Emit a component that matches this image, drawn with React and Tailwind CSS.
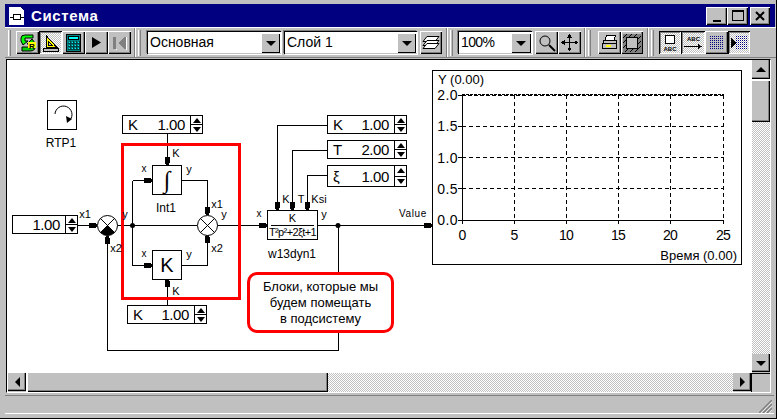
import React from "react";

const OX = 7, OY = 60;
const FONT = "font-['Liberation_Sans',Arial,sans-serif]";
const RAISED = "shadow-[inset_1px_1px_0_#fff,inset_-1px_-1px_0_#000,inset_-2px_-2px_0_#808080]";
const SCROLL = "shadow-[inset_-1px_-1px_0_#000,inset_-2px_-2px_0_#808080]";
const PRESSED = "shadow-[inset_1px_1px_0_#000,inset_-1px_-1px_0_#fff,inset_2px_2px_0_#808080]";
const DITHER = "bg-[repeating-conic-gradient(#c0c0c0_0_25%,#fff_0_50%)] bg-[length:2px_2px]";

function Pos({ x, y, w, h, className = "", children }) {
  return (
    <div className={"absolute " + className} style={{ left: x - OX, top: y - OY, width: w, height: h }}>
      {children}
    </div>
  );
}

function Lbl({ cx, cy, size = 11, className = "", children }) {
  return (
    <div
      className={"absolute -translate-x-1/2 -translate-y-1/2 whitespace-nowrap leading-none text-black " + className}
      style={{ left: cx - OX, top: cy - OY, fontSize: size }}
    >
      {children}
    </div>
  );
}

function Spinner({ x, y, w, h, label, value }) {
  return (
    <Pos x={x} y={y} w={w} h={h} className="flex border border-black bg-white text-black">
      <div className="flex-1 flex items-center justify-between pl-[5px] pr-[5px] text-[15px] leading-none">
        <span>{label}</span>
        <span className="tracking-[-0.4px]">{value}</span>
      </div>
      <div className="w-[12px] border-l border-black flex flex-col items-center">
        <div className="flex-1 w-full flex items-center justify-center border-b border-black">
          <div className="w-0 h-0 border-x-[4px] border-x-transparent border-b-[5px] border-b-black" />
        </div>
        <div className="flex-1 w-full flex items-center justify-center">
          <div className="w-0 h-0 border-x-[4px] border-x-transparent border-t-[5px] border-t-black" />
        </div>
      </div>
    </Pos>
  );
}

const ArrR = ({ x, y }) => <polygon points={`${x - 8},${y - 2} ${x - 3},${y - 2} ${x},${y - 1} ${x},${y + 2} ${x - 3},${y + 3} ${x - 8},${y + 3}`} fill="#000" />;
const ArrD = ({ x, y }) => <polygon points={`${x - 2},${y - 8} ${x + 3},${y - 8} ${x + 3},${y - 3} ${x + 2},${y} ${x - 1},${y} ${x - 2},${y - 3}`} fill="#000" />;
const ArrU = ({ x, y }) => <polygon points={`${x - 1},${y} ${x + 2},${y} ${x + 3},${y + 3} ${x + 3},${y + 8} ${x - 2},${y + 8} ${x - 2},${y + 3}`} fill="#000" />;

function Wires() {
  return (
    <svg className="absolute left-0 top-0" width="745" height="313" viewBox="7 60 745 313">
      <g fill="none" stroke="#000" strokeWidth="1" shapeRendering="crispEdges">
        <path d="M77.5 225.5H97" />
        <path d="M117 225.5H197" />
        <path d="M132.5 180.5H152M132.5 180.5V265.5H152" />
        <path d="M182 180.5H207.5V215" />
        <path d="M182 265.5H207.5V235" />
        <path d="M167.5 133V165M167.5 279V305" />
        <path d="M107.5 235V350.5H338.5V225" />
        <path d="M217 225.5H267M318 225.5H432" />
        <path d="M327 125.5H277.5V210M327 150.5H292.5V210M327 175.5H307.5V210" />
      </g>
      <circle cx="132.5" cy="225.5" r="2.5" fill="#000" />
      <circle cx="338" cy="225.5" r="2.5" fill="#000" />
      <g shapeRendering="crispEdges">
        <ArrR x={97} y={225} /><ArrR x={152} y={180} /><ArrR x={152} y={265} /><ArrR x={267} y={225} /><ArrR x={432} y={225} />
        <ArrD x={167} y={165} /><ArrD x={207} y={215} /><ArrD x={277} y={210} /><ArrD x={292} y={210} /><ArrD x={307} y={210} />
        <ArrU x={107} y={236} /><ArrU x={207} y={235} /><ArrU x={167} y={279} />
      </g>
      <circle cx="107.5" cy="225.5" r="10" fill="#fff" stroke="#000" />
      <path d="M100.4 218.4L114.6 232.6M114.6 218.4L100.4 232.6" stroke="#000" />
      <path d="M107.5 225.5L114.6 232.6A10 10 0 0 1 100.4 232.6Z" fill="#000" />
      <circle cx="207.5" cy="225.5" r="10" fill="#fff" stroke="#000" />
      <path d="M200.4 218.4L214.6 232.6M214.6 218.4L200.4 232.6" stroke="#000" />
      <rect x="122.5" y="144.5" width="117" height="154" fill="none" stroke="#ff0000" strokeWidth="3" shapeRendering="crispEdges" />
      <path d="M55 114 A8.5 8.5 0 1 1 70 120" fill="none" stroke="#000" />
      <path d="M66 116L72 119L67 123Z" fill="#000" />
    </svg>
  );
}

function Chart() {
  const xs = [462, 514, 566, 618, 670, 723];
  const ys = [95, 126, 157, 188, 220];
  const xl = ["0", "5", "10", "15", "20", "25"];
  const yl = ["0.0", "0.5", "1.0", "1.5", "2.0"];
  return (
    <Pos x={432} y={70} w={310} h={195} className="border border-black bg-white">
      <svg className="absolute left-0 top-0" width="308" height="193" viewBox="433 71 308 193">
        <g shapeRendering="crispEdges" stroke="#000" fill="none">
          {xs.slice(1).map((x) => <path key={x} d={`M${x + 0.5} 95V220`} strokeDasharray="4 3" />)}
          {ys.slice(1, 4).map((y) => <path key={y} d={`M462 ${y + 0.5}H724`} strokeDasharray="4 3" />)}
          <path d="M462 95.5H724" strokeDasharray="4 2" />
          <path d="M462.5 95V220.5H724" />
          <path d="M462 94.5H724" strokeDasharray="3 1" />
          {ys.map((y) => <path key={y} d={`M458 ${y + 0.5}H462`} />)}
          {xs.map((x) => <path key={x} d={`M${x + 0.5} 220V224`} />)}
        </g>
      </svg>
      {ys.map((y, i) => (
        <div key={y} className="absolute right-[283px] -translate-y-1/2 text-[14px] tracking-[0.4px] leading-none text-black" style={{ top: 220 - i * 31.25 - 71 }}>
          {yl[i]}
        </div>
      ))}
      {xs.map((x, i) => (
        <div key={x} className="absolute -translate-x-1/2 text-[14px] tracking-[-0.8px] leading-none text-black" style={{ left: x - 433, top: 157 }}>
          {xl[i]}
        </div>
      ))}
      <div className="absolute left-[5px] top-[2px] text-[13px] leading-none text-black">Y (0.00)</div>
      <div className="absolute right-[4px] top-[178px] text-[13px] leading-none text-black">Время (0.00)</div>
    </Pos>
  );
}

function Canvas() {
  return (
    <div className="relative flex-1 bg-white overflow-hidden">
      <Wires />
      <Pos x={47} y={100} w={30} h={30} className="border border-black" />
      <Lbl cx={61} cy={143} size={12}>RTP1</Lbl>
      <Spinner x={122} y={115} w={81} h={19} label="K" value="1.00" />
      <Spinner x={12} y={215} w={66} h={19} label="" value="1.00" />
      <Spinner x={127} y={305} w={80} h={19} label="K" value="1.00" />
      <Spinner x={327} y={115} w={80} h={19} label="K" value="1.00" />
      <Spinner x={327} y={140} w={80} h={19} label="T" value="2.00" />
      <Spinner x={327} y={165} w={80} h={22} label="ξ" value="1.00" />
      <Pos x={152} y={165} w={30} h={30} className="border border-black bg-white flex items-center justify-center text-[24px] leading-none font-bold font-['Liberation_Serif',serif] text-black">∫</Pos>
      <Pos x={152} y={250} w={30} h={30} className="border border-black bg-white flex items-center justify-center text-[20px] leading-none text-black">K</Pos>
      <Pos x={267} y={210} w={51} h={30} className="border border-black bg-white flex flex-col items-center text-black">
        <div className="text-[11px] leading-[13px] mt-[1px]">K</div>
        <div className="w-[43px] border-t border-black" />
        <div className="text-[11px] leading-[13px] tracking-[-0.6px] whitespace-nowrap">T²p²+2ξt+1</div>
      </Pos>
      <Lbl cx={144} cy={169} size={10}>x</Lbl>
      <Lbl cx={189} cy={169}>y</Lbl>
      <Lbl cx={176} cy={153}>K</Lbl>
      <Lbl cx={217} cy={204}>x1</Lbl>
      <Lbl cx={224} cy={214}>y</Lbl>
      <Lbl cx={166} cy={208} size={12}>Int1</Lbl>
      <Lbl cx={85} cy={214}>x1</Lbl>
      <Lbl cx={125} cy={214}>y</Lbl>
      <Lbl cx={116} cy={248}>x2</Lbl>
      <Lbl cx={217} cy={248}>x2</Lbl>
      <Lbl cx={144} cy={254} size={10}>x</Lbl>
      <Lbl cx={189} cy={254}>y</Lbl>
      <Lbl cx={176} cy={291}>K</Lbl>
      <Lbl cx={286} cy={199}>K</Lbl>
      <Lbl cx={301} cy={199}>T</Lbl>
      <Lbl cx={319} cy={199}>Ksi</Lbl>
      <Lbl cx={259} cy={214} size={10}>x</Lbl>
      <Lbl cx={324} cy={214}>y</Lbl>
      <Lbl cx={413} cy={214} size={10} className="tracking-[0.6px]">Value</Lbl>
      <Lbl cx={292} cy={254} size={12}>w13dyn1</Lbl>
      <Chart />
      <Pos x={247} y={272} w={147} h={61} className="border-[3px] border-[#ff0000] rounded-[10px] bg-white flex flex-col items-center justify-center text-[13px] leading-[16px] text-black">
        <div>Блоки, которые мы</div>
        <div>будем помещать</div>
        <div>в подсистему</div>
      </Pos>
    </div>
  );
}

function Btn({ w = 23, pressed, dither, children }) {
  return (
    <div
      className={
        "h-[23px] flex items-center justify-center shrink-0 " +
        (pressed ? PRESSED + " " : RAISED + " ") +
        (dither ? DITHER : "bg-[#c0c0c0]")
      }
      style={{ width: w }}
    >
      {children}
    </div>
  );
}

function GroupSep() {
  return <div className="w-[2px] h-[29px] bg-[#808080] border-r border-white shrink-0" />;
}

function GripBar() {
  return <div className="w-[3px] h-[26px] bg-[#c0c0c0] border-l border-white border-r border-r-[#808080] shrink-0" />;
}

function Combo({ w, text, btn = 19, className = "" }) {
  return (
    <div className="h-[23px] flex bg-white shrink-0 border-t border-l border-black shadow-[inset_0_-1px_0_#c0c0c0,-1px_-1px_0_#808080,1px_1px_0_#fff]" style={{ width: w }}>
      <div className={"flex-1 pl-[2px] text-[14px] leading-[21px] text-black whitespace-nowrap overflow-hidden " + className}>{text}</div>
      <div className="h-[20px] mr-[1px] mt-[1px] flex items-center justify-center bg-[#c0c0c0] shadow-[inset_1px_1px_0_#fff,inset_-1px_-1px_0_#000]" style={{ width: btn }}>
        <div className="w-0 h-0 border-x-[5px] border-x-transparent border-t-[5px] border-t-black" />
      </div>
    </div>
  );
}

const Abc = ({ x, y, size = 6 }) => (
  <text x={x} y={y} fontSize={size} fontWeight="bold" fontFamily="'Liberation Sans',sans-serif" fill="#000">ABC</text>
);

function Dots({ x0, y0, nx, ny }) {
  const d = [];
  for (let i = 0; i < nx; i++) for (let j = 0; j < ny; j++) d.push(<rect key={i + "-" + j} x={x0 + i * 2} y={y0 + j * 2} width="1" height="1" fill="#000080" />);
  return <g shapeRendering="crispEdges">{d}</g>;
}

function Toolbar() {
  return (
    <div className="h-[31px] flex items-center pl-[2px] border-t border-white border-b border-b-[#808080] shrink-0 mr-[-1px]">
      <div className="w-[1px] shrink-0" />
      <GripBar />
      <div className="w-[5px] shrink-0" />
      <Btn>
        <svg width="18" height="18" viewBox="0 0 18 18">
          <path d="M2 7V4Q2 1 6 1H14V4H6V7H9L4 11Z" fill="#00ff00" stroke="#000" />
          <path d="M16 9V13Q16 17 11 17H3V13H11V10H8L13 5Z" fill="#00d000" stroke="#000" />
          <rect x="9" y="8" width="8" height="6" fill="#ffff00" />
          <text x="10" y="14.5" fontSize="8" fontWeight="bold" fontFamily="'Liberation Sans',sans-serif">R</text>
        </svg>
      </Btn>
      <Btn pressed dither>
        <svg width="18" height="18" viewBox="0 0 18 18" shapeRendering="crispEdges">
          <path d="M4 1.5L14.5 13H4Z" fill="#ffff00" stroke="#000" />
          <path d="M6.5 7.5L10.5 11.5H6.5Z" fill="#c0c0c0" stroke="#000" />
          <rect x="1.5" y="14.5" width="15" height="2.5" fill="#c0c0c0" stroke="#000" />
        </svg>
      </Btn>
      <Btn>
        <svg width="17" height="18" viewBox="0 0 17 18" shapeRendering="crispEdges">
          <rect x="1.5" y="0.5" width="14" height="17" fill="#008080" stroke="#000" />
          <rect x="3.5" y="2.5" width="10" height="3" fill="#00ffff" stroke="#000" />
          <g fill="#00ffff" stroke="#000" strokeWidth="0.5">
            {[7, 10, 13].map((y) => [3, 6, 9, 12].map((x) => <rect key={x + "" + y} x={x} y={y} width="2" height="2" />))}
          </g>
        </svg>
      </Btn>
      <Btn>
        <svg width="11" height="11" viewBox="0 0 11 11"><path d="M1 0L10 5.5L1 11Z" fill="#000" /></svg>
      </Btn>
      <Btn>
        <svg width="15" height="14" viewBox="0 0 15 14" shapeRendering="crispEdges">
          <path d="M1 1H4V13H1ZM12 1H14V13H12L6 7Z" fill="#808080" />
          <path d="M4 13H5M14 13H15M14 1V13" stroke="#fff" />
        </svg>
      </Btn>
      <div className="w-[3px] shrink-0" />
      <GroupSep />
      <div className="w-[2px] shrink-0" />
      <GripBar />
      <div className="w-[6px] shrink-0" />
      <Combo w={134} text="Основная" />
      <div className="w-[3px] shrink-0" />
      <Combo w={133} text="Слой 1" />
      <div className="w-[3px] shrink-0" />
      <Btn w={22}>
        <svg width="18" height="16" viewBox="0 0 18 16" fill="#fff" stroke="#000">
          <path d="M5 1.5H17L13 6.5H1Z" />
          <path d="M5 5.5H17L13 10.5H1Z" />
          <path d="M5 8.5H17L13 13.5H1Z" />
        </svg>
      </Btn>
      <div className="w-[4px] shrink-0" />
      <GroupSep />
      <div className="w-[2px] shrink-0" />
      <GripBar />
      <div className="w-[5px] shrink-0" />
      <Combo w={74} text="100%" btn={20} className="tracking-[-0.6px]" />
      <div className="w-[3px] shrink-0" />
      <Btn>
        <svg width="18" height="18" viewBox="0 0 18 18" fill="none" stroke="#000">
          <circle cx="7" cy="7" r="5" />
          <path d="M11 11L17 17" strokeWidth="2" />
        </svg>
      </Btn>
      <Btn>
        <svg width="17" height="17" viewBox="0 0 17 17" fill="#000" shapeRendering="crispEdges">
          <path d="M8 3H9V14H8ZM3 8H14V9H3Z" />
          <path d="M8.5 0L11 3.5H6ZM8.5 17L6 13.5H11ZM0 8.5L3.5 6V11ZM17 8.5L13.5 11V6Z" />
        </svg>
      </Btn>
      <div className="w-[3px] shrink-0" />
      <GroupSep />
      <div className="w-[2px] shrink-0" />
      <GripBar />
      <div className="w-[7px] shrink-0" />
      <Btn>
        <svg width="17" height="17" viewBox="0 0 17 17" stroke="#000" shapeRendering="crispEdges">
          <path d="M5.5 1.5H14.5L13 6.5H4Z" fill="#fff" />
          <path d="M2.5 6.5H15.5V13.5H2.5Z" fill="#c0c0c0" />
          <path d="M1.5 9.5H15.5V14.5H1.5Z" fill="#c0c0c0" />
          <path d="M5 11.5H10" stroke="#ffff00" strokeWidth="2" />
        </svg>
      </Btn>
      <Btn w={22}>
        <svg width="18" height="18" viewBox="0 0 18 18" shapeRendering="crispEdges">
          <rect x="0" y="0" width="18" height="18" fill="#808080" />
          <path d="M0 4L4 0M0 9L9 0M0 14L14 0M2 18L18 2M7 18L18 7M12 18L18 12" stroke="#000" />
          <rect x="3.5" y="3.5" width="11" height="11" fill="#c0c0c0" stroke="#000" />
        </svg>
      </Btn>
      <div className="w-[4px] shrink-0" />
      <GroupSep />
      <div className="w-[2px] shrink-0" />
      <GripBar />
      <div className="w-[5px] shrink-0" />
      <Btn w={22} pressed dither>
        <svg width="18" height="18" viewBox="0 0 18 18" shapeRendering="crispEdges">
          <rect x="4.5" y="1.5" width="9" height="8" fill="#fff" stroke="#000" />
          <Abc x={2.5} y={16.5} />
        </svg>
      </Btn>
      <Btn w={24} pressed dither>
        <svg width="18" height="18" viewBox="0 0 18 18" shapeRendering="crispEdges">
          <Abc x={3} y={7} />
          <path d="M0 12.5H15" stroke="#000" />
          <path d="M14 10L18 12.5L14 15Z" fill="#000" />
        </svg>
      </Btn>
      <Btn>
        <svg width="15" height="15" viewBox="0 0 15 15"><Dots x0={1} y0={1} nx={7} ny={7} /></svg>
      </Btn>
      <Btn w={22} pressed dither>
        <svg width="18" height="16" viewBox="0 0 18 16" shapeRendering="crispEdges">
          <path d="M1 3L6 8L1 13Z" fill="#000" />
          <Dots x0={6} y0={1} nx={6} ny={7} />
        </svg>
      </Btn>
    </div>
  );
}

function SB({ h = 18, w = 18, dir }) {
  const tri = {
    up: "border-x-[5px] border-x-transparent border-b-[5px] border-b-black",
    down: "border-x-[5px] border-x-transparent border-t-[5px] border-t-black",
    left: "border-y-[5px] border-y-transparent border-r-[5px] border-r-black",
    right: "border-y-[5px] border-y-transparent border-l-[5px] border-l-black",
  }[dir];
  return (
    <div className={"shrink-0 flex items-center justify-center bg-[#c0c0c0] " + SCROLL} style={{ width: w, height: h }}>
      <div className={"w-0 h-0 " + tri} />
    </div>
  );
}

function Title() {
  return (
    <div className="h-[23px] bg-[#000080] flex items-center shrink-0 pl-[4px] pr-[5px]">
      <svg width="16" height="19" viewBox="0 0 16 19" className="shrink-0 mt-[1px]" shapeRendering="crispEdges">
        <path d="M0 0H11L15 4V18H0Z" fill="#fff" />
        <path d="M4.5 7.5H11.5V12.5H4.5ZM1 10H4M12 10H15" fill="none" stroke="#000" />
      </svg>
      <div className="ml-[6px] text-white text-[15px] font-bold leading-none tracking-[0.6px]">Система</div>
      <div className="flex-1" />
      <div className={"w-[21px] h-[18px] bg-[#c0c0c0] flex items-end justify-center pb-[3px] " + RAISED}>
        <div className="w-[8px] h-[2px] bg-black" />
      </div>
      <div className={"w-[21px] h-[18px] bg-[#c0c0c0] flex items-center justify-center " + RAISED}>
        <div className="w-[12px] h-[11px] border border-black border-t-2" />
      </div>
      <div className="w-[2px]" />
      <div className={"w-[20px] h-[18px] bg-[#c0c0c0] flex items-center justify-center " + RAISED}>
        <svg width="10" height="10" viewBox="0 0 10 10"><path d="M1 1L9 9M9 1L1 9" stroke="#000" strokeWidth="2" /></svg>
      </div>
    </div>
  );
}

export default function App() {
  return (
    <div className={"w-[777px] h-[419px] bg-[#c0c0c0] border-r border-b border-black pt-[4px] pl-[5px] pr-[1px] flex flex-col overflow-hidden " + FONT}>
      <Title />
      <Toolbar />
      <div className="ml-[1px] mr-[4px] mt-[1px] h-[334px] shrink-0 flex flex-col border-t border-l border-black border-r border-r-white border-b border-b-white">
        <div className="flex h-[313px] shrink-0">
          <Canvas />
          <div className="w-[18px] flex flex-col shrink-0">
            <SB dir="up" h={19} />
            <div className="h-[2px] shrink-0 bg-white" />
            <div className={"h-[41px] shrink-0 bg-[#c0c0c0] " + SCROLL} />
            <div className={"flex-1 " + DITHER} />
            <SB dir="down" h={18} />
            <div className="h-[1px] shrink-0" />
          </div>
        </div>
        <div className="flex h-[19px] shrink-0 bg-[#c0c0c0]">
          <div className="w-[1px] bg-white" />
          <SB dir="left" />
          <div className="w-[2px] bg-white" />
          <div className={"w-[300px] shrink-0 bg-[#c0c0c0] " + SCROLL} />
          <div className={"flex-1 " + DITHER} />
          <SB dir="right" />
          <div className="w-[19px] bg-[#c0c0c0] border-l border-t border-black" />
        </div>
      </div>
      <div className="mt-[2px] mr-[1px] h-[19px] shrink-0 relative border-t border-[#808080] border-b border-b-white">
        <svg className="absolute right-[2px] bottom-0" width="13" height="13" viewBox="0 0 13 13">
          <path d="M0 13L13 0M4 13L13 4M8 13L13 8" stroke="#808080" strokeWidth="1.5" />
          <path d="M2 13L13 2M6 13L13 6M10 13L13 10" stroke="#fff" strokeWidth="0.6" />
        </svg>
      </div>
    </div>
  );
}
